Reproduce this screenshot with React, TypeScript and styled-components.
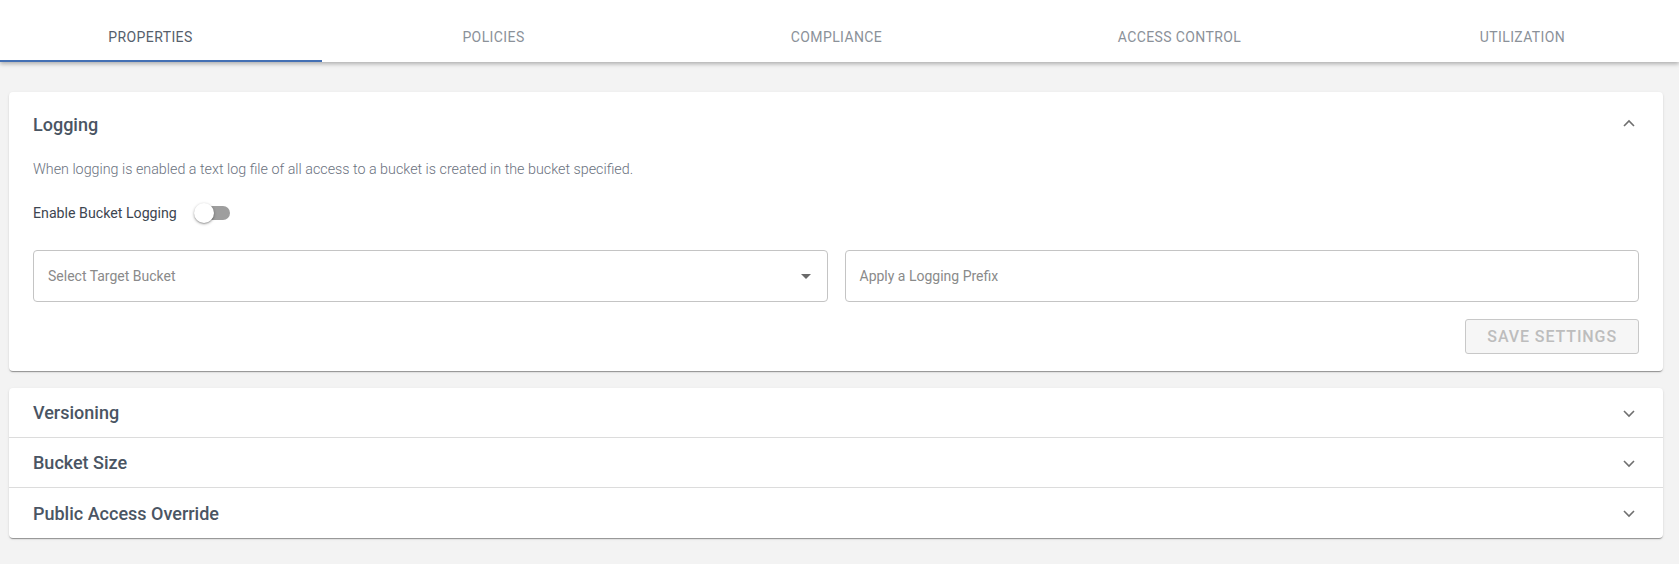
import React, { useState } from 'react';
import styled, { createGlobalStyle } from 'styled-components';

const GlobalStyle = createGlobalStyle`
  body {
    margin: 0;
    background: #f3f3f3;
    font-family: Roboto, "Liberation Sans", sans-serif;
    -webkit-font-smoothing: antialiased;
  }
`;

const tabs = ['Properties', 'Policies', 'Compliance', 'Access Control', 'Utilization'];
const sections = ['Versioning', 'Bucket Size', 'Public Access Override'];

const Chevron = ({ up }: { up?: boolean }) => (
  <svg width="20" height="20" viewBox="0 0 20 20">
    <polyline
      points={up ? '5,12 10,7 15,12' : '5,8 10,13 15,8'}
      fill="none"
      stroke="#6f6f6f"
      strokeWidth="1.6"
    />
  </svg>
);

export default function App() {
  const [active, setActive] = useState(0);
  const [logging, setLogging] = useState(false);

  return (
    <>
      <GlobalStyle />
      <TabBar>
        <TabRow>
          {tabs.map((t, i) => (
            <Tab key={t} $active={i === active} onClick={() => setActive(i)}>
              {t}
            </Tab>
          ))}
        </TabRow>
      </TabBar>
      <Main>
        <Card>
          <Header>
            <Title>Logging</Title>
            <Chevron up />
          </Header>
          <Details>
            <Description>
              When logging is enabled a text log file of all access to a bucket is created in the bucket specified.
            </Description>
            <ToggleRow>
              <Label>Enable Bucket Logging</Label>
              <SwitchTrack $on={logging} onClick={() => setLogging(!logging)}>
                <SwitchThumb $on={logging} />
              </SwitchTrack>
            </ToggleRow>
            <Fields>
              <Field>
                <Placeholder>Select Target Bucket</Placeholder>
                <Caret />
              </Field>
              <Field>
                <Placeholder>Apply a Logging Prefix</Placeholder>
              </Field>
            </Fields>
            <Actions>
              <SaveButton disabled>Save Settings</SaveButton>
            </Actions>
          </Details>
        </Card>
        <Card>
          {sections.map((s) => (
            <Row key={s}>
              <Title>{s}</Title>
              <Chevron />
            </Row>
          ))}
        </Card>
      </Main>
    </>
  );
}

const TabBar = styled.div`
  position: relative;
  z-index: 1;
  height: 62px;
  background: #fff;
  overflow: hidden;
  box-shadow: 0 2px 4px rgba(0, 0, 0, 0.28);
`;

const TabRow = styled.div`
  display: flex;
  height: 100%;
  margin-left: -21px;
`;

const Tab = styled.div<{ $active: boolean }>`
  flex: none;
  width: 343px;
  box-sizing: border-box;
  padding-top: 14px;
  display: flex;
  align-items: center;
  justify-content: center;
  font-size: 14px;
  letter-spacing: 0.4px;
  text-transform: uppercase;
  color: ${(p) => (p.$active ? '#56606c' : '#8b9199')};
  border-bottom: 2px solid ${(p) => (p.$active ? '#4470b4' : 'transparent')};
  cursor: pointer;
`;

const Main = styled.div`
  padding: 30px 16px 26px 9px;
  display: flex;
  flex-direction: column;
  gap: 17px;
`;

const Card = styled.div`
  background: #fff;
  border-radius: 4px;
  box-shadow: 0 2px 1px -1px rgba(0, 0, 0, 0.25), 0 1px 1px rgba(0, 0, 0, 0.14),
    0 1px 3px rgba(0, 0, 0, 0.1);
`;

const Header = styled.div`
  height: 64px;
  padding: 0 24px;
  display: flex;
  align-items: center;
  justify-content: space-between;
`;

const Row = styled(Header)`
  height: 49px;
  border-bottom: 1px solid #dcdcdc;

  &:last-child {
    height: 50px;
    border-bottom: none;
  }
`;

const Title = styled.div`
  font-size: 18px;
  font-weight: 500;
  color: #4a5563;
`;

const Details = styled.div`
  padding: 3px 24px 17px;
`;

const Description = styled.p`
  margin: 0;
  font-size: 14.3px;
  font-weight: 300;
  line-height: 20px;
  color: #6b7280;
`;

const ToggleRow = styled.div`
  margin-top: 22px;
  height: 24px;
  display: flex;
  align-items: center;
  gap: 17px;
`;

const Label = styled.span`
  font-size: 14.2px;
  color: #3d4550;
`;

const SwitchTrack = styled.div<{ $on: boolean }>`
  position: relative;
  width: 32px;
  height: 14px;
  margin-left: 4px;
  border-radius: 7px;
  background: ${(p) => (p.$on ? '#8aa4d0' : '#9e9e9e')};
  cursor: pointer;
`;

const SwitchThumb = styled.span<{ $on: boolean }>`
  position: absolute;
  top: -3px;
  left: ${(p) => (p.$on ? '14px' : '-4px')};
  width: 20px;
  height: 20px;
  border-radius: 50%;
  background: ${(p) => (p.$on ? '#4470b4' : '#fff')};
  box-shadow: 0 1px 3px rgba(0, 0, 0, 0.35), 0 1px 1px rgba(0, 0, 0, 0.14);
`;

const Fields = styled.div`
  margin-top: 25px;
  display: grid;
  grid-template-columns: 1fr 1fr;
  gap: 17px;
`;

const Field = styled.div`
  height: 52px;
  box-sizing: border-box;
  padding: 0 14px;
  border: 1px solid #c4c4c4;
  border-radius: 4px;
  display: flex;
  align-items: center;
  justify-content: space-between;
`;

const Placeholder = styled.span`
  font-size: 14px;
  color: #8a8a8a;
`;

const Caret = styled.span`
  width: 0;
  height: 0;
  margin-right: 2px;
  border-left: 5px solid transparent;
  border-right: 5px solid transparent;
  border-top: 5px solid #6a6a6a;
`;

const Actions = styled.div`
  margin-top: 17px;
  display: flex;
  justify-content: flex-end;
`;

const SaveButton = styled.button`
  height: 35px;
  padding: 0 21px;
  font-family: inherit;
  font-size: 16px;
  font-weight: 500;
  letter-spacing: 0.9px;
  text-transform: uppercase;
  color: #bdbdbd;
  background: #f6f6f6;
  border: 1px solid #c8c8c8;
  border-radius: 3px;
`;
